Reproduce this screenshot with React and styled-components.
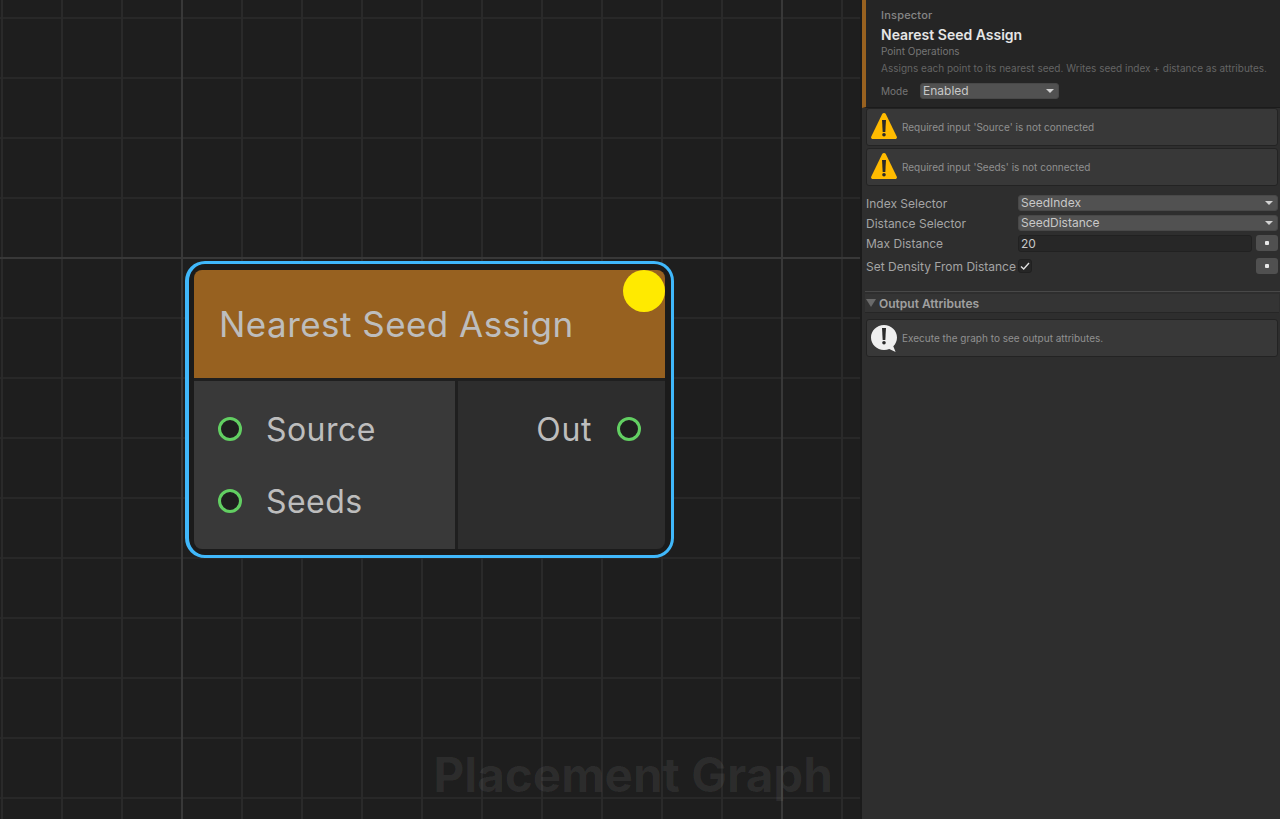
import React from "react";
import styled, { createGlobalStyle } from "styled-components";

const GlobalStyle = createGlobalStyle`
  html, body {
    margin: 0;
    height: 100%;
    background: #1e1e1e;
    font-family: Inter, "Liberation Sans", sans-serif;
  }
  #root {
    height: 100%;
  }
`;

const Page = styled.div`
  display: flex;
  width: 1280px;
  height: 819px;
  overflow: hidden;
`;

// grid: minor lines every 60px, brighter major ones every 600px
const Canvas = styled.div`
  position: relative;
  width: 860px;
  flex: none;
  background-color: #1e1e1e;
  background-image:
    linear-gradient(90deg, #383838 2px, transparent 2px),
    linear-gradient(180deg, #383838 2px, transparent 2px),
    linear-gradient(90deg, #2a2a2a 2px, transparent 2px),
    linear-gradient(180deg, #282828 2px, transparent 2px);
  background-size: 600px 600px, 600px 600px, 60px 60px, 60px 60px;
  background-position: 181px 0, 0 257px, 1px 0, 0 17px;
`;

const Watermark = styled.div`
  position: absolute;
  right: 27px;
  bottom: 16px;
  font-size: 47.6px;
  font-weight: 700;
  line-height: 56px;
  color: rgba(255, 255, 255, 0.065);
  white-space: nowrap;
`;

const Selection = styled.div`
  position: absolute;
  left: 185px;
  top: 261px;
  box-sizing: border-box;
  width: 489px;
  height: 297px;
  padding: 6px 6px 6px 5px;
  background: #1b1b1b;
  border: 3px solid #40b8fb;
  border-left-width: 4px;
  border-radius: 20px;
`;

const Node = styled.div`
  position: relative;
  display: flex;
  flex-direction: column;
  height: 100%;
  overflow: hidden;
  border-radius: 8px;
  background: #1f1f1f;
`;

const NodeHeader = styled.div`
  display: flex;
  align-items: center;
  box-sizing: border-box;
  height: 108px;
  padding: 0 25px 0;
  margin-bottom: 3px;
  background: #976120;
  color: #bdbdbd;
  font-size: 35px;
  letter-spacing: 0.46px;
`;

const Badge = styled.div`
  position: absolute;
  top: 0;
  right: 0;
  width: 42px;
  height: 42px;
  border-radius: 50%;
  background: #ffea00;
`;

const Ports = styled.div`
  flex: 1;
  display: flex;
  gap: 3px;
`;

const PortColumn = styled.div`
  display: flex;
  flex-direction: column;
  flex: ${(p) => (p.$output ? "1" : "none")};
  width: ${(p) => (p.$output ? "auto" : "261px")};
  box-sizing: border-box;
  padding-top: 12px;
  background: ${(p) => (p.$output ? "#2d2d2d" : "#393939")};
`;

const Port = styled.div`
  display: flex;
  flex-direction: ${(p) => (p.$output ? "row-reverse" : "row")};
  align-items: center;
  gap: ${(p) => (p.$output ? 25 : 24)}px;
  height: 72px;
  padding: 0 24px;
  color: #bdbdbd;
  font-size: 32px;
  letter-spacing: ${(p) => (p.$output ? 0.6 : 0.45)}px;
`;

const PortDot = styled.span`
  flex: none;
  box-sizing: border-box;
  width: 24px;
  height: 24px;
  border: 3px solid #62cf62;
  border-radius: 50%;
  background: #1f1f1f;
`;

const Panel = styled.div`
  flex: 1;
  display: flex;
  flex-direction: column;
  box-sizing: border-box;
  border-left: 2px solid #1b1b1b;
  background: #2e2e2e;
`;

const InspectorHead = styled.div`
  box-sizing: border-box;
  height: 108px;
  padding: 9px 12px 0 15px;
  border-left: 4px solid #976120;
  border-bottom: 1px solid #1b1b1b;
  background: #252525;
`;

const HeadLabel = styled.div`
  font-size: 11px;
  font-weight: 500;
  letter-spacing: 0.2px;
  line-height: 13px;
  color: #868686;
`;

const Title = styled.div`
  margin-top: 4px;
  font-size: 14px;
  font-weight: 600;
  line-height: 18px;
  color: #e6e6e6;
`;

const SubLabel = styled.div`
  margin-top: 1px;
  font-size: 10px;
  line-height: 13px;
  color: #757575;
`;

const Description = styled.div`
  margin-top: 4px;
  font-size: 10px;
  line-height: 13px;
  color: #646464;
  white-space: nowrap;
`;

const ModeRow = styled.div`
  display: flex;
  align-items: center;
  margin-top: 8px;
`;

const ModeLabel = styled.span`
  width: 39px;
  font-size: 10px;
  color: #757575;
`;

const Select = styled.div`
  display: flex;
  align-items: center;
  justify-content: space-between;
  box-sizing: border-box;
  width: ${(p) => p.$width || "auto"};
  flex: ${(p) => (p.$width ? "none" : "1")};
  height: 16px;
  padding: 0 4px 1px 2px;
  border: 1px solid #484848;
  border-radius: 3px;
  background: #515151;
  color: #c8c8c8;
  font-size: 12px;
`;

const Caret = styled.span`
  width: 0;
  height: 0;
  margin-top: 1px;
  border-left: 4px solid transparent;
  border-right: 4px solid transparent;
  border-top: 4px solid #d2d2d2;
`;

const Messages = styled.div`
  display: flex;
  flex-direction: column;
  gap: 2px;
  padding: 0 2px 0 4px;
`;

const HelpBox = styled.div`
  display: flex;
  align-items: center;
  gap: 5px;
  box-sizing: border-box;
  height: 38px;
  padding: 0 3px 0 4px;
  border: 1px solid #232323;
  border-radius: 3px;
  background: #383838;
  color: #909090;
  font-size: 10px;
`;

const Fields = styled.div`
  display: flex;
  flex-direction: column;
  padding: 7px 2px 0 4px;
`;

const FieldRow = styled.div`
  display: flex;
  align-items: center;
  height: ${(p) => p.$height || 20}px;
`;

const FieldLabel = styled.span`
  flex: none;
  width: 152px;
  color: #a4a4a4;
  font-size: 12px;
  white-space: nowrap;
`;

const NumberField = styled.div`
  flex: 1;
  box-sizing: border-box;
  height: 17px;
  padding: 0 2px;
  border: 1px solid #212121;
  border-radius: 3px;
  background: #272727;
  color: #c8c8c8;
  font-size: 12px;
  line-height: 15px;
`;

const Check = styled.div`
  display: flex;
  align-items: center;
  justify-content: center;
  box-sizing: border-box;
  width: 14px;
  height: 14px;
  border: 1px solid #202020;
  border-radius: 3px;
  background: #262626;
  color: #e0e0e0;
`;

const Spacer = styled.div`
  flex: 1;
`;

const OverrideButton = styled.div`
  display: flex;
  align-items: center;
  justify-content: center;
  flex: none;
  box-sizing: border-box;
  width: 22px;
  height: 16px;
  margin-left: 4px;
  border-radius: 3px;
  background: #505050;
  &::after {
    content: "";
    width: 3.5px;
    height: 3.5px;
    background: #e8e8e8;
    border-radius: 1px;
  }
`;

const Separator = styled.div`
  height: 1px;
  margin: 12px 0 2px 3px;
  background: #484848;
`;

const Foldout = styled.div`
  display: flex;
  align-items: center;
  gap: 3px;
  height: 18px;
  margin: 0 1px 6px 3px;
  padding-left: 1px;
  border-bottom: 1px solid #262626;
  background: #343434;
  color: #a0a0a0;
  font-size: 12px;
  font-weight: 600;
`;

const FoldCaret = styled.span`
  width: 0;
  height: 0;
  border-left: 5px solid transparent;
  border-right: 5px solid transparent;
  border-top: 8px solid #6a6a6a;
`;

const WarnSvg = styled.svg`
  flex: none;
  margin-bottom: 2px;
`;

const WarnIcon = () => (
  <WarnSvg width="26" height="26" viewBox="0 0 26 26">
    <path
      d="M13 0 C13.8 0 14.4 .4 14.8 1.1 L25.7 23.6 C26.3 24.9 25.6 26 24.2 26 L1.8 26 C.4 26 -.3 24.9 .3 23.6 L11.2 1.1 C11.6 .4 12.2 0 13 0 Z"
      fill="#ffbb00"
    />
    <path d="M11 7 h4 l-.7 12 h-2.6 Z" fill="#2a2a2a" />
    <circle cx="13" cy="21.7" r="1.8" fill="#2a2a2a" />
  </WarnSvg>
);

const InfoSvg = styled.svg`
  flex: none;
`;

const InfoIcon = () => (
  <InfoSvg width="26" height="27" viewBox="0 0 26 27">
    <path
      d="M13 0 C20.2 0 26 5.6 26 12.5 C26 16 24.6 19 22.3 21.3 L24.6 27 L18.3 24 C16.7 24.7 14.9 25 13 25 C5.8 25 0 19.4 0 12.5 C0 5.6 5.8 0 13 0 Z"
      fill="#efefef"
    />
    <path d="M11 3 h4 l-.7 12 h-2.6 Z" fill="#2a2a2a" />
    <circle cx="13" cy="17.7" r="1.8" fill="#2a2a2a" />
  </InfoSvg>
);

const CheckMark = () => (
  <svg width="10" height="10" viewBox="0 0 10 10" fill="none">
    <path d="M1 5.4 L3.7 8 L9 2" stroke="currentColor" strokeWidth="1.4" />
  </svg>
);

export default function App() {
  return (
    <Page>
      <GlobalStyle />
      <Canvas>
        <Watermark>Placement Graph</Watermark>
        <Selection>
          <Node>
            <NodeHeader>Nearest Seed Assign</NodeHeader>
            <Badge />
            <Ports>
              <PortColumn>
                <Port>
                  <PortDot />
                  Source
                </Port>
                <Port>
                  <PortDot />
                  Seeds
                </Port>
              </PortColumn>
              <PortColumn $output>
                <Port $output>
                  <PortDot />
                  Out
                </Port>
              </PortColumn>
            </Ports>
          </Node>
        </Selection>
      </Canvas>
      <Panel>
        <InspectorHead>
          <HeadLabel>Inspector</HeadLabel>
          <Title>Nearest Seed Assign</Title>
          <SubLabel>Point Operations</SubLabel>
          <Description>
            Assigns each point to its nearest seed. Writes seed index + distance as attributes.
          </Description>
          <ModeRow>
            <ModeLabel>Mode</ModeLabel>
            <Select $width="139px">
              Enabled
              <Caret />
            </Select>
          </ModeRow>
        </InspectorHead>
        <Messages>
          <HelpBox>
            <WarnIcon />
            Required input 'Source' is not connected
          </HelpBox>
          <HelpBox>
            <WarnIcon />
            Required input 'Seeds' is not connected
          </HelpBox>
        </Messages>
        <Fields>
          <FieldRow>
            <FieldLabel>Index Selector</FieldLabel>
            <Select>
              SeedIndex
              <Caret />
            </Select>
          </FieldRow>
          <FieldRow>
            <FieldLabel>Distance Selector</FieldLabel>
            <Select>
              SeedDistance
              <Caret />
            </Select>
          </FieldRow>
          <FieldRow>
            <FieldLabel>Max Distance</FieldLabel>
            <NumberField>20</NumberField>
            <OverrideButton />
          </FieldRow>
          <FieldRow $height={26}>
            <FieldLabel>Set Density From Distance</FieldLabel>
            <Check>
              <CheckMark />
            </Check>
            <Spacer />
            <OverrideButton />
          </FieldRow>
        </Fields>
        <Separator />
        <Foldout>
          <FoldCaret />
          Output Attributes
        </Foldout>
        <Messages>
          <HelpBox>
            <InfoIcon />
            Execute the graph to see output attributes.
          </HelpBox>
        </Messages>
      </Panel>
    </Page>
  );
}
